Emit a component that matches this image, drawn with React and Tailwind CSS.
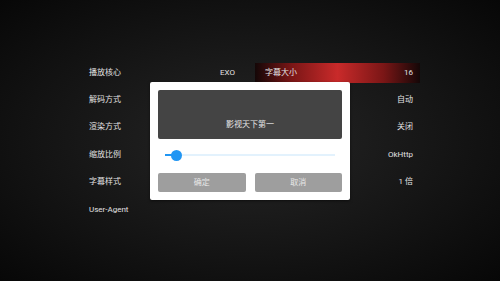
import React from 'react';

const FONT = { fontFamily: 'Roboto, "Noto Sans CJK SC", sans-serif' };

const leftRows = [
  { label: '播放核心', value: 'EXO' },
  { label: '解码方式', value: '' },
  { label: '渲染方式', value: '' },
  { label: '缩放比例', value: '' },
  { label: '字幕样式', value: '' },
  { label: 'User-Agent', value: '' },
];

const rightRows = [
  { label: '字幕大小', value: '16', focused: true },
  { label: '', value: '自动' },
  { label: '', value: '关闭' },
  { label: '', value: 'OkHttp' },
  { label: '', value: '1 倍' },
];

function Row({ label, value, focused, right }) {
  return (
    <div className="h-[27.4px] flex items-center">
      <div
        className={`h-[20px] w-full flex items-center justify-between ${right ? 'pl-[10px] pr-[7px]' : 'px-[7px]'} ${
          focused ? 'bg-[linear-gradient(90deg,#140707_0%,#7a1616_22%,#c92a2a_50%,#7a1616_78%,#140707_100%)]' : ''
        }`}
      >
        <span>{label}</span>
        <span>{value}</span>
      </div>
    </div>
  );
}

export default function App() {
  return (
    <div
      className="relative w-[500px] h-[281px] overflow-hidden bg-[radial-gradient(ellipse_at_center,#262626_0%,#151515_55%,#070707_100%)] text-[8px] text-[#e2e2e2]"
      style={FONT}
    >
      {/* ─── Settings grid ─── */}
      <div className="flex pt-[59px] pl-[82px] gap-[13px]">
        <div className="w-[160px] flex flex-col">
          {leftRows.map((r, i) => (
            <Row key={i} {...r} />
          ))}
        </div>
        <div className="w-[165px] flex flex-col">
          {rightRows.map((r, i) => (
            <Row key={i} {...r} right />
          ))}
        </div>
      </div>

      {/* ─── Subtitle size dialog ─── */}
      <div className="absolute left-[150px] top-[82px] w-[200px] h-[118px] bg-white rounded-[2px] p-[8px] flex flex-col shadow-[0_1px_3px_rgba(0,0,0,0.5)]">
        <div className="h-[49px] rounded-[2px] bg-[#444444] flex items-end justify-center pb-[8px] text-[8px] text-[#e6e6e6]">
          影视天下第一
        </div>
        <div className="relative h-[32px] mx-[7px] flex items-center">
          <div className="h-[2px] w-full bg-[#e3f2fd]" />
          <div className="absolute left-0 h-[2px] w-[11px] bg-[#2196f3]" />
          <div className="absolute left-[5.5px] w-[11px] h-[11px] rounded-full bg-[#2196f3]" />
        </div>
        <div className="flex gap-[9px] mt-auto">
          <button className="flex-1 h-[19px] rounded-[2px] bg-[#9e9e9e] text-[#e8e8e8] text-[8px]">确定</button>
          <button className="flex-1 h-[19px] rounded-[2px] bg-[#9e9e9e] text-[#e8e8e8] text-[8px]">取消</button>
        </div>
      </div>
    </div>
  );
}
